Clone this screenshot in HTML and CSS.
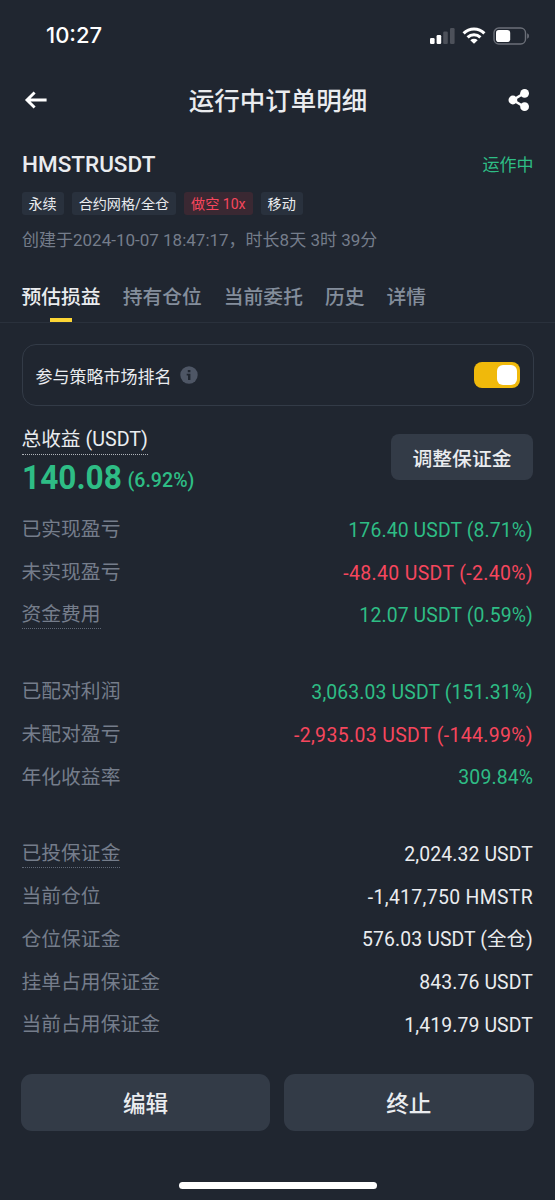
FILE: index.html
```html
<!DOCTYPE html>
<html lang="zh-CN">
<head>
<meta charset="utf-8">
<title>运行中订单明细</title>
<link rel="stylesheet" href="styles.css">
</head>
<body>
<div class="status">
  <span class="time">10:27</span>
  <svg class="status-icons" width="102" height="24" viewBox="0 0 102 24">
    <g fill="#fff">
      <rect x="1" y="13" width="4.6" height="6" rx="1.2"/>
      <rect x="7.6" y="10" width="4.6" height="9" rx="1.2"/>
      <g fill="#4d515a"><rect x="14.2" y="6.5" width="4.6" height="12.5" rx="1.2"/><rect x="21" y="3" width="4.6" height="16" rx="1.2"/></g>
      <path d="M45 18.8L41.3 15.2A5.4 5.4 0 0 1 48.7 15.2Z"/>
    </g>
    <g fill="none" stroke="#fff" stroke-width="3.1">
      <path d="M34.6 8.3A14.9 14.9 0 0 1 55.4 8.3"/>
      <path d="M38.6 12.4A9.2 9.2 0 0 1 51.4 12.4"/>
    </g>
    <rect x="65" y="3" width="31.5" height="16" rx="4.8" fill="none" stroke="#6b6f78" stroke-width="1.4"/>
    <rect x="67" y="5" width="14.2" height="12" rx="2.8" fill="#fff"/>
    <path d="M98.2 8.2Q100 9 100 11T98.2 13.8Z" fill="#6b6f78"/>
  </svg>
</div>
<header class="nav">
  <svg width="24" height="20" viewBox="0 0 24 20" fill="none" stroke="#fff" stroke-width="2.9"><path d="M22.6 10H3M10.6 2.5L3 10L10.6 17.5"/></svg>
  <h1>运行中订单明细</h1>
  <svg width="22" height="24" viewBox="0 0 22 24"><path d="M16.5 5L5 12L16.5 19" fill="none" stroke="#fff" stroke-width="2.6"/><g fill="#fff"><circle cx="16.6" cy="5.3" r="4.4"/><circle cx="4.9" cy="12" r="4.4"/><circle cx="16.6" cy="18.7" r="4.4"/></g></svg>
</header>
<section class="order">
  <div class="order-head"><h2>HMSTRUSDT</h2><span class="running">运作中</span></div>
  <div class="tags"><span class="tag">永续</span><span class="tag">合约网格/全仓</span><span class="tag short">做空 10x</span><span class="tag">移动</span></div>
  <p class="created">创建于<span class="dt">2024-10-07 18:47:17</span>，时长8天 3时 39分</p>
</section>
<nav class="tabs"><span class="tab active">预估损益</span><span class="tab">持有仓位</span><span class="tab">当前委托</span><span class="tab">历史</span><span class="tab">详情</span></nav>
<main>
  <div class="ranking">
    <span>参与策略市场排名</span>
    <svg width="18" height="18" viewBox="0 0 18 18"><circle cx="9" cy="9" r="8.7" fill="#4e5665"/><path d="M7.8 4h2.6v2.2H7.8zM6.7 7.7h3.7v6.2H8V9.5H6.7z" fill="#202630"/></svg>
    <span class="switch"><i></i></span>
  </div>
  <div class="profit">
    <div>
      <div class="profit-label">总收益 <span>(USDT)</span></div>
      <div class="profit-value"><b>140.08</b><span>(6.92%)</span></div>
    </div>
    <button class="adjust">调整保证金</button>
  </div>
  <dl class="rows">
    <div><dt>已实现盈亏</dt><dd class="up">176.40 USDT (8.71%)</dd></div>
    <div><dt>未实现盈亏</dt><dd class="down">-48.40 USDT (-2.40%)</dd></div>
    <div><dt class="hint">资金费用</dt><dd class="up">12.07 USDT (0.59%)</dd></div>
  </dl>
  <dl class="rows">
    <div><dt>已配对利润</dt><dd class="up">3,063.03 USDT (151.31%)</dd></div>
    <div><dt>未配对盈亏</dt><dd class="down">-2,935.03 USDT (-144.99%)</dd></div>
    <div><dt>年化收益率</dt><dd class="up">309.84%</dd></div>
  </dl>
  <dl class="rows last">
    <div><dt class="hint">已投保证金</dt><dd>2,024.32 USDT</dd></div>
    <div><dt>当前仓位</dt><dd class="position">-1,417,750 HMSTR</dd></div>
    <div><dt>仓位保证金</dt><dd>576.03 USDT (全仓)</dd></div>
    <div><dt>挂单占用保证金</dt><dd>843.76 USDT</dd></div>
    <div><dt>当前占用保证金</dt><dd>1,419.79 USDT</dd></div>
  </dl>
</main>
<footer class="actions"><button>编辑</button><button>终止</button></footer>
<div class="home"></div>
</body>
</html>
```
FILE: styles.css
```css
* { box-sizing: border-box; }
body {
  margin: 0;
  width: 555px;
  height: 1200px;
  overflow: hidden;
  display: flex;
  flex-direction: column;
  background: #202630;
  color: #eaecef;
  font-family: Roboto, "Noto Sans CJK SC", sans-serif;
}
h1, h2, p, dl, dd { margin: 0; }
svg { display: block; flex: none; }
button {
  border: 0;
  padding: 0;
  background: #333b47;
  color: #eaecef;
  font-family: inherit;
  font-weight: 500;
}
.status {
  height: 72px;
  padding: 0 24px 0 46px;
  display: flex;
  align-items: center;
  justify-content: space-between;
}
.time {
  margin-bottom: 2px;
  font: 500 22px/26px Inter, sans-serif;
  color: #fff;
}
.status-icons { margin-top: 1px; }
.nav {
  height: 56px;
  padding: 0 25px 0 24px;
  display: flex;
  align-items: center;
  justify-content: space-between;
}
.nav h1 {
  padding-top: 2px;
  font-size: 25.5px;
  line-height: 36px;
  font-weight: 500;
}
.order { padding: 20px 22px 0; height: 142px; }
.order-head {
  height: 32px;
  display: flex;
  align-items: center;
  justify-content: space-between;
}
.order-head h2 { font-size: 22.5px; font-weight: 500; }
.running { margin: 0 -0.5px 2px 0; font-size: 17px; color: #2ebd85; }
.tags { display: flex; gap: 8px; margin: 12px -0.5px 0; }
.tag {
  height: 23px;
  line-height: 24px;
  padding: 0 7px;
  border-radius: 3px;
  background: #29313d;
  font-size: 14.1px;
  white-space: nowrap;
}
.tag.short { background: #3a2832; color: #f6465d; }
.created {
  margin-top: 12px;
  font-size: 17px;
  line-height: 26px;
  color: #757d8b;
  white-space: nowrap;
}
.tabs {
  height: 53px;
  padding: 0 21.5px;
  display: flex;
  gap: 22px;
  border-bottom: 1px solid #2a313c;
}
.tab {
  position: relative;
  height: 53px;
  line-height: 55px;
  font-size: 19.8px;
  font-weight: 500;
  color: #848e9c;
}
.tab.active { color: #eaecef; }
.tab.active::after {
  content: "";
  position: absolute;
  left: 28.5px;
  bottom: 1px;
  width: 22px;
  height: 4px;
  background: #fcd535;
}
main { padding: 21px 22px 0 21.5px; }
.ranking {
  height: 62px;
  margin-right: -0.5px;
  padding: 0 13px;
  display: flex;
  align-items: center;
  gap: 8.5px;
  border: 1.5px solid #333b47;
  border-radius: 14px;
  font-size: 17px;
}
.switch {
  width: 46px;
  height: 26px;
  margin-left: auto;
  padding: 3px;
  display: flex;
  justify-content: flex-end;
  border-radius: 8px;
  background: #f0b90b;
}
.switch i { width: 20px; height: 20px; border-radius: 6px; background: #fff; }
.profit { height: 102px; display: flex; justify-content: space-between; }
.profit-label {
  width: max-content;
  margin-top: 20px;
  height: 29px;
  line-height: 28px;
  font-size: 19.7px;
  border-bottom: 1px dotted #b0b4ba;
}
.profit-value {
  display: flex;
  align-items: flex-start;
  line-height: 44px;
  color: #2ebd85;
}
.profit-value b {
  width: 106px;
  font-size: 34px;
  font-weight: 700;
  transform: scaleX(0.93);
  transform-origin: left;
}
.profit-value span { font-size: 19.6px; line-height: 51px; font-weight: 500; }
.adjust {
  width: 142px;
  height: 46px;
  margin-top: 28px;
  border-radius: 8px;
  font-size: 19.8px;
}
.rows { margin-bottom: 34px; }
.rows.last { margin-bottom: 28px; }
.rows div {
  height: 42.7px;
  display: flex;
  align-items: center;
  justify-content: space-between;
}
dt { padding-top: 2px; font-size: 19.8px; line-height: 28px; color: #757d8b; }
dt.hint {
  line-height: 26px;
  border-bottom: 1px dotted #606876;
}
dd {
  padding-top: 3px;
  font-size: 19.4px;
  line-height: 28px;
  letter-spacing: 0.12px;
  white-space: nowrap;
}
.up { color: #2ebd85; }
.down { color: #f6465d; letter-spacing: 0.38px; }
.position { letter-spacing: 0.33px; }
.actions { display: flex; gap: 14px; padding: 0 21.5px 0 21px; }
.actions button { flex: 1; height: 57px; border-radius: 11px; font-size: 22.6px; }
.home { width: 198px; height: 7px; margin: 51px auto 0; border-radius: 4px; background: #fff; }
```
